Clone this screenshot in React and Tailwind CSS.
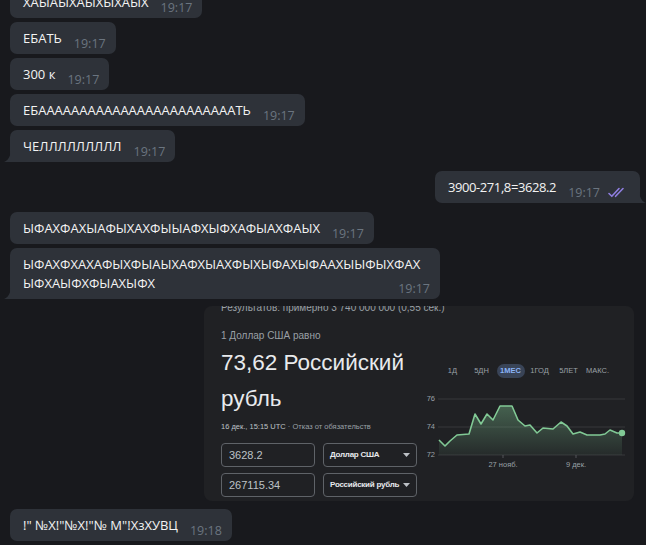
import React from 'react';

const font = "font-['Open_Sans','Noto_Sans',sans-serif]";

function TailLeft() {
    return (
        <svg className="absolute -left-[6px] bottom-0" width="7" height="11" viewBox="0 0 7 11" aria-hidden="true">
            <path d="M7 0 V11 H0 C3 10 6 7 7 0 Z" fill="#2e3239" />
        </svg>
    );
}

function TailRight() {
    return (
        <svg className="absolute -right-[6px] bottom-0" width="7" height="11" viewBox="0 0 7 11" aria-hidden="true">
            <path d="M0 0 V11 H7 C4 10 1 7 0 0 Z" fill="#2e3239" />
        </svg>
    );
}

function Checks() {
    return (
        <svg width="19" height="11" viewBox="0 0 19 11" className="ml-[8px] mb-[1px] translate-y-[2px]" aria-hidden="true">
            <path d="M1 6.5 L3.8 9.3 L11 1.5" fill="none" stroke="#8f7ee0" strokeWidth="1.6" strokeLinecap="round" strokeLinejoin="round" />
            <path d="M7.6 9.3 L15 1.5" fill="none" stroke="#8f7ee0" strokeWidth="1.6" strokeLinecap="round" />
        </svg>
    );
}

function Bubble({ text, time, tail, className = '' }) {
    return (
        <div className={`relative flex items-end bg-[#2e3239] pl-[13px] pr-[10px] pt-[7px] pb-[6px] ${tail ? 'rounded-[7px] rounded-bl-none' : 'rounded-[7px]'} ${className}`}>
            <span className="whitespace-nowrap text-[13px] leading-[19px] text-[#f3f3f3]">{text}</span>
            <span className="ml-[12px] translate-y-[5px] text-[12.5px] leading-[19px] text-[#6b7580]">{time}</span>
            {tail && <TailLeft />}
        </div>
    );
}

const points = [
    [19, 52], [25, 58], [30, 53], [37, 47], [49, 46], [55, 26], [61, 36], [67, 26], [73, 32],
    [80, 18], [92, 18], [98, 32], [105, 38], [110, 37], [117, 45], [123, 40], [133, 41],
    [141, 34], [147, 38], [153, 46], [160, 44], [167, 47], [180, 47], [185, 46], [190, 42],
    [197, 45], [202, 45],
];

function Chart() {
    const line = points.map((p, i) => `${i ? 'L' : 'M'}${p[0]} ${p[1]}`).join(' ');
    const area = `${line} L202 67 L19 67 Z`;
    return (
        <svg width="210" height="85" viewBox="0 0 210 85" className="mt-[10px]" aria-hidden="true">
            <defs>
                <linearGradient id="fillg" x1="0" y1="0" x2="0" y2="1">
                    <stop offset="0" stopColor="#81c995" stopOpacity="0.38" />
                    <stop offset="1" stopColor="#81c995" stopOpacity="0.06" />
                </linearGradient>
            </defs>
            {[11, 39, 67].map((y) => (
                <line key={y} x1="18" x2="205" y1={y} y2={y} stroke="#3c4043" strokeWidth="0.8" />
            ))}
            <g fontSize="7.5" fill="#9aa0a6" fontFamily="Liberation Sans, Arial, sans-serif">
                <text x="15" y="13" textAnchor="end">76</text>
                <text x="15" y="41" textAnchor="end">74</text>
                <text x="15" y="69" textAnchor="end">72</text>
                <text x="83" y="79" textAnchor="middle">27 нояб.</text>
                <text x="156" y="79" textAnchor="middle">9 дек.</text>
            </g>
            <line x1="83" x2="83" y1="67" y2="70" stroke="#5f6368" strokeWidth="0.8" />
            <line x1="156" x2="156" y1="67" y2="70" stroke="#5f6368" strokeWidth="0.8" />
            <path d={area} fill="url(#fillg)" />
            <path d={line} fill="none" stroke="#81c995" strokeWidth="1.6" strokeLinejoin="round" />
            <circle cx="202" cy="45" r="3.2" fill="#81c995" />
        </svg>
    );
}

function Arrow() {
    return (
        <svg width="7" height="4" viewBox="0 0 7 4" className="shrink-0" aria-hidden="true">
            <path d="M0 0 H7 L3.5 4 Z" fill="#bdc1c6" />
        </svg>
    );
}

function GoogleCard() {
    const tabs = ['1Д', '5ДН', '1МЕС', '1ГОД', '5ЛЕТ', 'МАКС.'];
    return (
        <div className="ml-[194px] mt-[7px] h-[195px] w-[430px] overflow-hidden rounded-[8px] bg-[#202124] font-['Liberation_Sans',Arial,sans-serif]">
            <div className="-mt-[4px] pl-[17px] text-[10px] leading-[12px] text-[#9aa0a6]">
                Результатов: примерно 3 740 000 000 (0,55 сек.)
            </div>
            <div className="flex">
                <div className="w-[216px] pl-[17px]">
                    <div className="mt-[15px] text-[10px] leading-[14px] text-[#9aa0a6]">1 Доллар США равно</div>
                    <div className="mt-[2px] text-[22.5px] leading-[36px] text-[#e8eaed]">
                        73,62 Российский<br />рубль
                    </div>
                    <div className="mt-[4px] whitespace-nowrap text-[7.5px] leading-[12px] text-[#9aa0a6]">
                        <span className="text-[#bdc1c6]">16 дек., 15:15 UTC</span> · Отказ от обязательств
                    </div>
                    <div className="mt-[10px] flex flex-col gap-[6px]">
                        {[['3628.2', 'Доллар США'], ['267115.34', 'Российский рубль']].map(([v, c]) => (
                            <div key={v} className="flex gap-[8px]">
                                <div className="flex h-[24px] w-[94px] items-center rounded-[4px] border border-[#5f6368] pl-[7px] text-[11px] text-[#bdc1c6]">
                                    {v}
                                </div>
                                <div className="flex h-[24px] w-[94px] items-center justify-between rounded-[4px] border border-[#5f6368] pl-[6px] pr-[6px] text-[8px] font-bold tracking-[-0.25px] text-[#e8eaed]">
                                    <span className="whitespace-nowrap">{c}</span>
                                    <Arrow />
                                </div>
                            </div>
                        ))}
                    </div>
                </div>
                <div className="flex flex-col pt-[50px]">
                    <div className="flex h-[14px] pl-[18px]">
                        {tabs.map((t) => (
                            <div key={t} className="flex w-[29px] items-center justify-center">
                                {t === '1МЕС' ? (
                                    <span className="flex h-[14px] w-[28px] items-center justify-center rounded-full bg-[#394457] text-[7.5px] font-bold text-[#8ab4f8]">
                                        {t}
                                    </span>
                                ) : (
                                    <span className="text-[7.5px] text-[#9aa0a6]">{t}</span>
                                )}
                            </div>
                        ))}
                    </div>
                    <Chart />
                </div>
            </div>
        </div>
    );
}

export default function App() {
    return (
        <div className={`h-[545px] w-[646px] overflow-hidden bg-[#18191d] ${font}`}>
            <div className="flex flex-col items-start pl-[10px] pr-[6px]">
                <Bubble className="-mt-[14px]" text="ХАЫАЫХАЫХЫХАЫХ" time="19:17" />
                <Bubble className="mt-[4px]" text="ЕБАТЬ" time="19:17" />
                <Bubble className="mt-[4px]" text="300 к" time="19:17" />
                <Bubble className="mt-[4px]" text="ЕБААААААААААААААААААААААААТЬ" time="19:17" />
                <Bubble className="mt-[4px]" text="ЧЕЛЛЛЛЛЛЛЛЛ" time="19:17" tail />

                <div className="relative mt-[9px] flex items-end self-end rounded-[7px] rounded-br-none bg-[#2e3239] pl-[13px] pr-[13px] pt-[7px] pb-[6px]">
                    <span className="whitespace-nowrap text-[13px] leading-[19px] tracking-[-0.4px] text-[#f3f3f3]">3900-271,8=3628.2</span>
                    <span className="ml-[12px] translate-y-[5px] text-[12.5px] leading-[19px] text-[#6b7580]">19:17</span>
                    <Checks />
                    <TailRight />
                </div>

                <Bubble className="mt-[9px]" text="ЫФАХФАХЫАФЫХАХФЫЫАФХЫФХАФЫАХФАЫХ" time="19:17" />

                <div className="relative mt-[4px] flex w-[430px] flex-col rounded-[7px] rounded-bl-none bg-[#2e3239] pl-[13px] pr-[10px] pt-[7px] pb-[6px]">
                    <span className="whitespace-nowrap text-[13px] leading-[19px] text-[#f3f3f3]">
                        ЫФАХФХАХАФЫХФЫАЫХАФХЫАХФЫХЫФАХЫФААХЫЫФЫХФАХ<br />ЫФХАЫФХФЫАХЫФХ
                    </span>
                    <span className="-mt-[19px] self-end translate-y-[5px] text-[12.5px] leading-[19px] text-[#6b7580]">19:17</span>
                    <TailLeft />
                </div>

                <GoogleCard />

                <Bubble className="mt-[8px]" text={'!" №Х!"№Х!"№ М"!ХзХУВЦ'} time="19:18" />
                <div className="mt-[4px] h-[20px] w-[70px] rounded-[7px] bg-[#2e3239]" />
            </div>
        </div>
    );
}
